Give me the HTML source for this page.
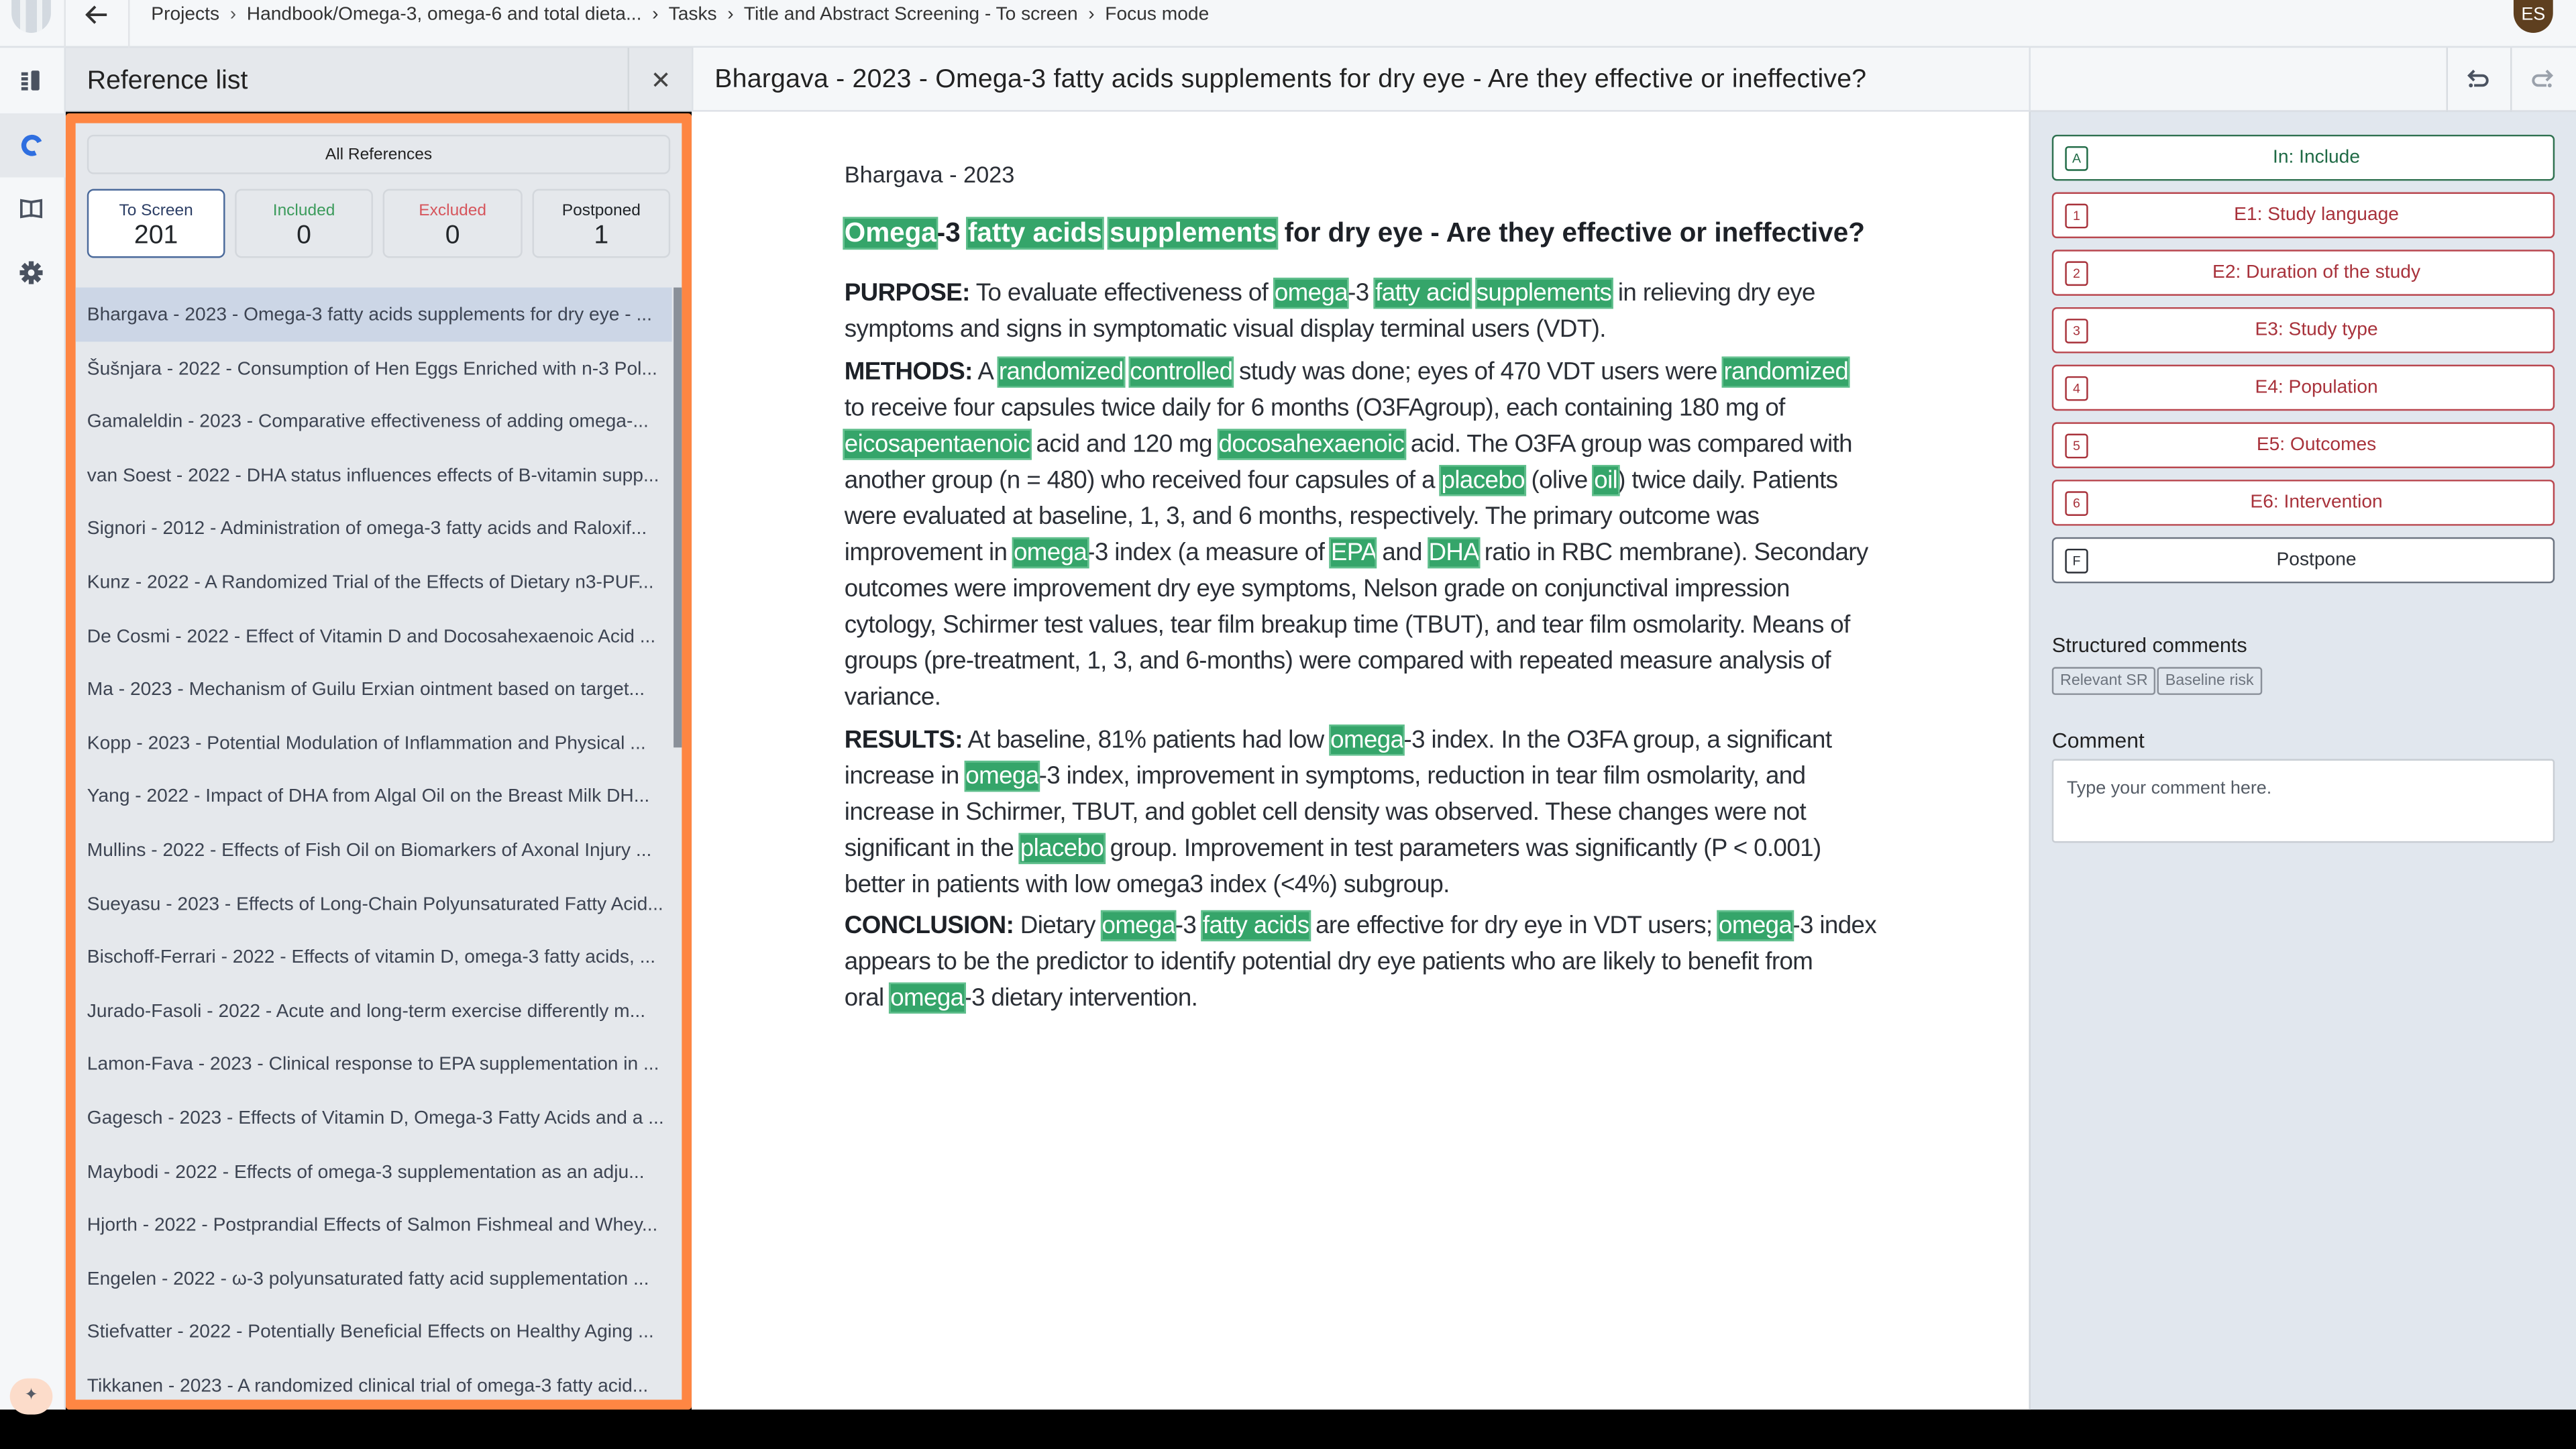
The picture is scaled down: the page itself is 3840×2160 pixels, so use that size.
<!DOCTYPE html>
<html><head><meta charset="utf-8"><style>
*{margin:0;padding:0;box-sizing:border-box}
html,body{width:3840px;height:2160px;overflow:hidden;background:#000}
#s{position:absolute;left:0;top:0;width:1568px;height:882px;transform:scale(2.44898);transform-origin:0 0;font-family:"Liberation Sans",sans-serif;color:#212529;background:#000}
.a{position:absolute}
.top{left:0;top:0;width:1568px;height:29px;background:#f5f7f9;border-bottom:1px solid #dde1e6}
.bc{top:3px;font-size:11.5px;color:#333;white-space:nowrap}
.rail{left:0;top:29px;width:40px;height:829px;background:#f5f7f9;border-right:1px solid #dde1e6}
.ph{left:40px;top:29px;width:381px;height:39px;background:#e5e8ec;border-bottom:1px solid #d8dce1}
.orange{left:40px;top:69px;width:381px;height:789px;background:#e5e8ec;border:6px solid #fe8643;border-radius:2px}
.card{top:115px;height:42px;width:84px;border:1px solid #d3d7dc;border-radius:4px;background:#e5e8ec;text-align:center}
.card .l{font-size:10px;margin-top:7px}
.card .n{font-size:16px;margin-top:1px}
.li{left:46px;width:363px;height:32.6px;font-size:11.5px;color:#3d4452;padding:11px 0 0 7px;white-space:nowrap;overflow:hidden}
.main{left:421px;top:29px;width:814px;height:829px;background:#fff}
.mh{left:421px;top:29px;width:814px;height:39px;background:#f5f7f9;border-bottom:1px solid #dde1e6;border-left:1px solid #dde1e6}
.txt{left:514px;font-size:15px;line-height:22px;white-space:nowrap;color:#2b2f36;letter-spacing:-0.25px}
.h{background:#35a56a;color:#fff;outline:1px solid #5fbf8c}
b{color:#1d2127}
.right{left:1235px;top:68px;width:333px;height:790px;background:#e1e7ee;border-left:1px solid #d3d8de}
.rh{left:1235px;top:29px;width:333px;height:39px;background:#f5f7f9;border-bottom:1px solid #dde1e6;border-left:1px solid #dde1e6}
.btn{left:1249px;width:306px;height:28px;background:#fff;border:1px solid #b9474f;border-radius:3px;color:#a8323b;font-size:11.5px;text-align:center;line-height:27px;padding-left:16px}
.btn .k{position:absolute;left:7px;top:6px;width:14px;height:15px;border:1px solid currentColor;border-radius:2px;font-size:8px;line-height:13px;padding:0}
.tag{top:406px;height:17px;border:1px solid #8a9099;border-radius:2px;font-size:9.5px;color:#6c737d;line-height:15px;padding:0 4px;background:#e1e7ee}
</style></head><body><div id="s">
<div class="a top"></div>
<div class="a" style="left:7px;top:0;width:24px;height:20px;border-radius:0 0 12px 12px;background:linear-gradient(90deg,#cfd6dd 0 22%,#eef1f4 22% 36%,#cfd6dd 36% 64%,#eef1f4 64% 78%,#cfd6dd 78%);opacity:.9"></div>
<div class="a" style="left:39px;top:0;width:1px;height:29px;background:#e1e4e8"></div>
<div class="a" style="left:78px;top:0;width:1px;height:29px;background:#e1e4e8"></div>
<svg class="a" style="left:52px;top:3px" width="14" height="12" viewBox="0 0 14 12"><path d="M13 6H2M6 1L1 6l5 5" stroke="#333" stroke-width="1.6" fill="none"/></svg>
<div class="a bc" style="left:92px;top:3px">Projects &nbsp;<span style="color:#555">›</span>&nbsp; Handbook/Omega-3, omega-6 and total dieta... &nbsp;<span>›</span>&nbsp; Tasks &nbsp;›&nbsp; Title and Abstract Screening - To screen &nbsp;›&nbsp; Focus mode</div>
<div class="a" style="left:1530px;top:0;width:24px;height:20px;border-radius:0 0 12px 12px;background:#5e3f1f;color:#fff;font-size:11px;text-align:center;line-height:18px">ES</div>

<div class="a rail"></div>
<div class="a" style="left:0;top:69px;width:40px;height:39px;background:#e5e8ec"></div>
<div class="a" style="left:13px;top:43px;width:12px;height:12px;"><div style="position:absolute;left:0;top:1px;width:4px;height:2px;background:#4a5260;box-shadow:0 3px #4a5260,0 6px #4a5260,0 9px #4a5260"></div><div style="position:absolute;left:6px;top:0;width:5px;height:12px;background:#4a5260;border-radius:1px"></div></div>
<div class="a" style="left:13px;top:82px;width:13px;height:13px;border:3.5px solid #2f6fe0;border-radius:50%;border-right-color:transparent;transform:rotate(20deg)"></div>
<svg class="a" style="left:12px;top:120px" width="14" height="14" viewBox="0 0 14 14"><path d="M1 2v10l6-1 6 1V2L7 3 1 2zM7 3v9" stroke="#4a5260" stroke-width="1.5" fill="none"/></svg>
<svg class="a" style="left:12px;top:159px" width="14" height="14" viewBox="0 0 14 14"><g fill="#4a5260"><circle cx="7" cy="7" r="4.5"/><rect x="5.5" y="0" width="3" height="14"/><rect x="0" y="5.5" width="14" height="3"/><rect x="5.5" y="0" width="3" height="14" transform="rotate(45 7 7)"/><rect x="5.5" y="0" width="3" height="14" transform="rotate(-45 7 7)"/></g><circle cx="7" cy="7" r="2" fill="#f5f7f9"/></svg>
<div class="a" style="left:6px;top:839px;width:26px;height:22px;border-radius:13px;background:#fcdcca;color:#555b66;font-size:10px;text-align:center;line-height:22px">✦</div>

<div class="a ph"></div>
<div class="a" style="left:53px;top:41px;font-size:16px;color:#222">Reference list</div>
<div class="a" style="left:382px;top:29px;width:1px;height:39px;background:#d3d7dc"></div>
<div class="a" style="left:396px;top:40px;font-size:15px;color:#444">✕</div>

<div class="a orange"></div>
<div class="a" style="left:53px;top:82px;width:355px;height:24px;border:1px solid #d3d7dc;border-radius:4px;font-size:10px;text-align:center;line-height:24px;color:#222">All References</div>
<div class="a card" style="left:53px;background:#fff;border-color:#4b6a9b"><div class="l" style="color:#2d3f66">To Screen</div><div class="n">201</div></div>
<div class="a card" style="left:143px"><div class="l" style="color:#3c9b5c">Included</div><div class="n">0</div></div>
<div class="a card" style="left:233px;width:85px"><div class="l" style="color:#d6555c">Excluded</div><div class="n">0</div></div>
<div class="a card" style="left:324px"><div class="l">Postponed</div><div class="n">1</div></div>
<div class="a" style="left:410px;top:175px;width:5px;height:280px;background:#8a9099"></div>
<div class="a li" style="top:175px;background:#ccd6e6">Bhargava - 2023 - Omega-3 fatty acids supplements for dry eye - ...</div>
<div class="a li" style="top:207.6px">Šušnjara - 2022 - Consumption of Hen Eggs Enriched with n-3 Pol...</div>
<div class="a li" style="top:240.2px">Gamaleldin - 2023 - Comparative effectiveness of adding omega-...</div>
<div class="a li" style="top:272.8px">van Soest - 2022 - DHA status influences effects of B-vitamin supp...</div>
<div class="a li" style="top:305.4px">Signori - 2012 - Administration of omega-3 fatty acids and Raloxif...</div>
<div class="a li" style="top:338px">Kunz - 2022 - A Randomized Trial of the Effects of Dietary n3-PUF...</div>
<div class="a li" style="top:370.6px">De Cosmi - 2022 - Effect of Vitamin D and Docosahexaenoic Acid ...</div>
<div class="a li" style="top:403.2px">Ma - 2023 - Mechanism of Guilu Erxian ointment based on target...</div>
<div class="a li" style="top:435.8px">Kopp - 2023 - Potential Modulation of Inflammation and Physical ...</div>
<div class="a li" style="top:468.4px">Yang - 2022 - Impact of DHA from Algal Oil on the Breast Milk DH...</div>
<div class="a li" style="top:501px">Mullins - 2022 - Effects of Fish Oil on Biomarkers of Axonal Injury ...</div>
<div class="a li" style="top:533.6px">Sueyasu - 2023 - Effects of Long-Chain Polyunsaturated Fatty Acid...</div>
<div class="a li" style="top:566.2px">Bischoff-Ferrari - 2022 - Effects of vitamin D, omega-3 fatty acids, ...</div>
<div class="a li" style="top:598.8px">Jurado-Fasoli - 2022 - Acute and long-term exercise differently m...</div>
<div class="a li" style="top:631.4px">Lamon-Fava - 2023 - Clinical response to EPA supplementation in ...</div>
<div class="a li" style="top:664px">Gagesch - 2023 - Effects of Vitamin D, Omega-3 Fatty Acids and a ...</div>
<div class="a li" style="top:696.6px">Maybodi - 2022 - Effects of omega-3 supplementation as an adju...</div>
<div class="a li" style="top:729.2px">Hjorth - 2022 - Postprandial Effects of Salmon Fishmeal and Whey...</div>
<div class="a li" style="top:761.8px">Engelen - 2022 - ω-3 polyunsaturated fatty acid supplementation ...</div>
<div class="a li" style="top:794.4px">Stiefvatter - 2022 - Potentially Beneficial Effects on Healthy Aging ...</div>
<div class="a li" style="top:827px;height:25px">Tikkanen - 2023 - A randomized clinical trial of omega-3 fatty acid...</div>

<div class="a main"></div>
<div class="a mh"></div>
<div class="a" style="left:435px;top:40px;font-size:16px;color:#222;white-space:nowrap;letter-spacing:0.1px">Bhargava - 2023 - Omega-3 fatty acids supplements for dry eye - Are they effective or ineffective?</div>
<div class="a" style="left:514px;top:98px;font-size:14px;color:#2b2f36">Bhargava - 2023</div>
<div class="a" style="left:514px;top:133px;font-size:16.5px;font-weight:bold;white-space:nowrap;color:#1d2127;letter-spacing:0px"><span class="h">Omega</span>-3 <span class="h">fatty acids</span> <span class="h">supplements</span> for dry eye - Are they effective or ineffective?</div>
<div class="a txt" style="top:168px"><b>PURPOSE:</b> To evaluate effectiveness of <span class="h">omega</span>-3 <span class="h">fatty acid</span> <span class="h">supplements</span> in relieving dry eye<br>symptoms and signs in symptomatic visual display terminal users (VDT).</div>
<div class="a txt" style="top:216px"><b>METHODS:</b> A <span class="h">randomized</span> <span class="h">controlled</span> study was done; eyes of 470 VDT users were <span class="h">randomized</span><br>to receive four capsules twice daily for 6 months (O3FAgroup), each containing 180 mg of<br><span class="h">eicosapentaenoic</span> acid and 120 mg <span class="h">docosahexaenoic</span> acid. The O3FA group was compared with<br>another group (n = 480) who received four capsules of a <span class="h">placebo</span> (olive <span class="h">oil</span>) twice daily. Patients<br>were evaluated at baseline, 1, 3, and 6 months, respectively. The primary outcome was<br>improvement in <span class="h">omega</span>-3 index (a measure of <span class="h">EPA</span> and <span class="h">DHA</span> ratio in RBC membrane). Secondary<br>outcomes were improvement dry eye symptoms, Nelson grade on conjunctival impression<br>cytology, Schirmer test values, tear film breakup time (TBUT), and tear film osmolarity. Means of<br>groups (pre-treatment, 1, 3, and 6-months) were compared with repeated measure analysis of<br>variance.</div>
<div class="a txt" style="top:440px"><b>RESULTS:</b> At baseline, 81% patients had low <span class="h">omega</span>-3 index. In the O3FA group, a significant<br>increase in <span class="h">omega</span>-3 index, improvement in symptoms, reduction in tear film osmolarity, and<br>increase in Schirmer, TBUT, and goblet cell density was observed. These changes were not<br>significant in the <span class="h">placebo</span> group. Improvement in test parameters was significantly (P &lt; 0.001)<br>better in patients with low omega3 index (&lt;4%) subgroup.</div>
<div class="a txt" style="top:553px"><b>CONCLUSION:</b> Dietary <span class="h">omega</span>-3 <span class="h">fatty acids</span> are effective for dry eye in VDT users; <span class="h">omega</span>-3 index<br>appears to be the predictor to identify potential dry eye patients who are likely to benefit from<br>oral <span class="h">omega</span>-3 dietary intervention.</div>

<div class="a rh"></div>
<div class="a" style="left:1489px;top:29px;width:1px;height:39px;background:#d8dce1"></div>
<div class="a" style="left:1528px;top:29px;width:1px;height:39px;background:#d8dce1"></div>
<svg class="a" style="left:1501px;top:41px" width="15" height="14" viewBox="0 0 15 14"><path d="M5 2L2 5l3 3M2 5h8a3 3 0 010 6H5" stroke="#4a5260" stroke-width="1.6" fill="none"/><circle cx="3" cy="11" r="1.2" fill="#4a5260"/></svg>
<svg class="a" style="left:1540px;top:41px" width="15" height="14" viewBox="0 0 15 14"><path d="M10 2l3 3-3 3M13 5H5a3 3 0 000 6h5" stroke="#9aa1ab" stroke-width="1.6" fill="none"/><circle cx="12" cy="11" r="1.2" fill="#9aa1ab"/></svg>
<div class="a right"></div>
<div class="a btn" style="top:82px;border-color:#2f7150;color:#1f6a45"><span class="k">A</span>In: Include</div>
<div class="a btn" style="top:117px"><span class="k">1</span>E1: Study language</div>
<div class="a btn" style="top:152px"><span class="k">2</span>E2: Duration of the study</div>
<div class="a btn" style="top:187px"><span class="k">3</span>E3: Study type</div>
<div class="a btn" style="top:222px"><span class="k">4</span>E4: Population</div>
<div class="a btn" style="top:257px"><span class="k">5</span>E5: Outcomes</div>
<div class="a btn" style="top:292px"><span class="k">6</span>E6: Intervention</div>
<div class="a btn" style="top:327px;border-color:#6b7380;color:#2b2f36"><span class="k">F</span>Postpone</div>
<div class="a" style="left:1249px;top:386px;font-size:12.5px;color:#222">Structured comments</div>
<div class="a tag" style="left:1249px">Relevant SR</div>
<div class="a tag" style="left:1313px">Baseline risk</div>
<div class="a" style="left:1249px;top:443px;font-size:13px;color:#222">Comment</div>
<div class="a" style="left:1249px;top:462px;width:306px;height:51px;background:#fff;border:1px solid #c8cdd3;border-radius:2px;font-size:11px;color:#555c66;padding:11px 0 0 8px">Type your comment here.</div>
</div></body></html>
